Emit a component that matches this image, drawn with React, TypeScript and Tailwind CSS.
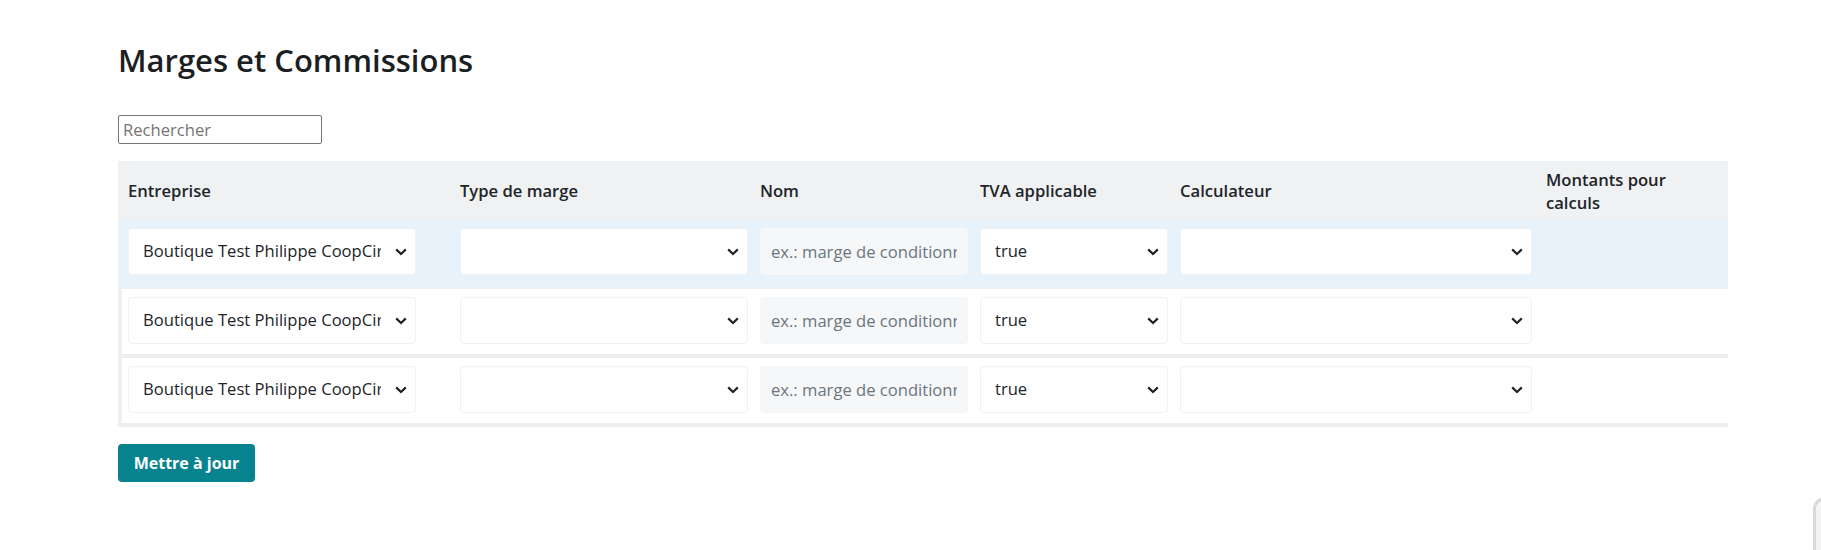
import { useState } from "react";

type Row = {
  entreprise: string;
  tva: string;
};

const rows: Row[] = [
  { entreprise: "Boutique Test Philippe CoopCircuits", tva: "true" },
  { entreprise: "Boutique Test Philippe CoopCircuits", tva: "true" },
  { entreprise: "Boutique Test Philippe CoopCircuits", tva: "true" },
];

function Chevron() {
  return (
    <svg
      width="12"
      height="8"
      viewBox="0 0 12 8"
      className="pointer-events-none absolute right-[9px] top-1/2 -translate-y-1/2"
    >
      <path d="M1.2 1.4l4.8 4.6 4.8-4.6" fill="none" stroke="#1f2328" strokeWidth="2.2" />
    </svg>
  );
}

function Select({
  value,
  options,
  className,
}: {
  value: string;
  options: string[];
  className: string;
}) {
  return (
    <div className={`relative ${className}`}>
      <select
        defaultValue={value}
        className="h-[47px] w-full appearance-none rounded-[4px] border border-[#f0f1f2] bg-white pl-[14px] pr-[34px] text-[16.6px] text-[#212529] outline-none"
      >
        {options.map((o) => (
          <option key={o} value={o}>
            {o}
          </option>
        ))}
      </select>
      <Chevron />
    </div>
  );
}

export default function App() {
  const [search, setSearch] = useState("");

  return (
    <div className="relative min-h-[550px] bg-white pl-[118px] pt-[41px] font-['Open_Sans',sans-serif] text-[#212529]">
      <h1 className="text-[31px] font-semibold leading-[1.24] text-[#1b1f23]">
        Marges et Commissions
      </h1>

      <input
        value={search}
        onChange={(e) => setSearch(e.target.value)}
        placeholder="Rechercher"
        className="mt-[36px] block h-[29px] w-[204px] rounded-[2px] border border-[#767676] px-[4px] text-[16.6px] placeholder:text-[#757575] outline-none"
      />

      <div className="mt-[17px] w-[1610px] overflow-hidden">
        <div className="flex h-[59px] items-center bg-[#eff1f3] pl-[4px] text-[16.6px] font-semibold leading-[1.4]">
          <div className="w-[332px] shrink-0 pl-[6px]">Entreprise</div>
          <div className="w-[300px] shrink-0 pl-[6px]">Type de marge</div>
          <div className="w-[220px] shrink-0 pl-[6px]">Nom</div>
          <div className="w-[200px] shrink-0 pl-[6px]">TVA applicable</div>
          <div className="w-[366px] shrink-0 pl-[6px]">Calculateur</div>
          <div className="w-[150px] shrink-0 pl-[6px]">Montants pour calculs</div>
        </div>

        {rows.map((row, i) => (
          <div
            key={i}
            className={
              i === 0
                ? "flex items-start border-b border-l-4 border-b-[#eeeeee] border-l-[#e8f2fb] bg-[#e8f2fb] pb-[13px] pt-[8px]"
                : "flex items-start border-b-4 border-l-4 border-[#eeeeee] bg-white pb-[10px] pt-[8px]"
            }
          >
            <div className="w-[332px] shrink-0 pl-[6px]">
              <Select
                value={row.entreprise}
                options={[row.entreprise]}
                className="w-[288px]"
              />
            </div>
            <div className="w-[300px] shrink-0 px-[6px]">
              <Select value="" options={[""]} className="w-full" />
            </div>
            <div className="w-[220px] shrink-0 px-[6px]">
              <input
                placeholder="ex.: marge de conditionnement"
                className="h-[47px] w-full rounded-[4px] border border-[#f5f7f9] bg-[#f5f7f9] px-[10px] text-[16.6px] placeholder:text-[#6c757d] outline-none"
              />
            </div>
            <div className="w-[200px] shrink-0 px-[6px]">
              <Select value={row.tva} options={["true", "false"]} className="w-full" />
            </div>
            <div className="w-[366px] shrink-0 pl-[6px] pr-[8px]">
              <Select value="" options={[""]} className="w-full" />
            </div>
            <div className="flex-1" />
          </div>
        ))}
      </div>

      <button className="mt-[17px] flex h-[38px] w-[137px] items-center justify-center rounded-[4px] bg-[#07838f] text-[16px] font-bold text-white">
        Mettre à jour
      </button>

      <div className="fixed right-[-32px] top-[497px] h-[70px] w-[40px] rounded-[12px] border-[3px] border-[#d9d9dc] bg-[#f4f4f5]" />
    </div>
  );
}
